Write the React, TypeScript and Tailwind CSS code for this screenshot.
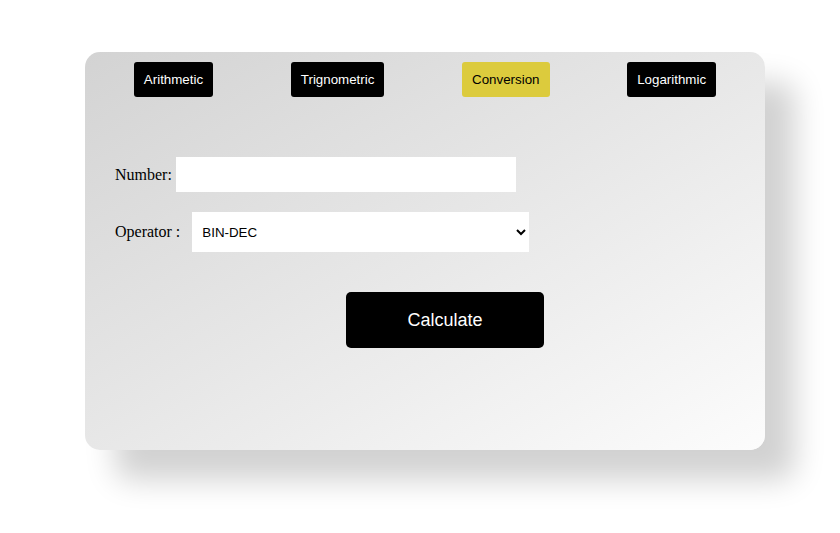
import { useState } from 'react';

const TABS = ['Arithmetic', 'Trignometric', 'Conversion', 'Logarithmic'];

export default function App() {
  const [active, setActive] = useState('Conversion');
  const [num, setNum] = useState('');
  const [op, setOp] = useState('BIN-DEC');

  return (
    <div className="min-h-screen bg-white pt-[52px] pl-[85px]">
      <div className="w-[680px] h-[398px] rounded-[15px] p-[10px] bg-gradient-to-br from-[#d3d3d3] to-[#fcfcfc] shadow-[30px_30px_30px_rgba(0,0,0,0.18)]">
        <div className="flex justify-around">
          {TABS.map((tab) => (
            <button
              key={tab}
              onClick={() => setActive(tab)}
              className={
                tab === active
                  ? 'h-[35px] px-[10px] rounded-[3px] bg-[#dccb3d] text-black text-[13.333px] font-["Liberation_Sans",Arial,sans-serif]'
                  : 'h-[35px] px-[10px] rounded-[3px] bg-black text-white text-[13.333px] font-["Liberation_Sans",Arial,sans-serif]'
              }
            >
              {tab}
            </button>
          ))}
        </div>

        <div className="pl-[20px] mt-[60px] font-['Liberation_Serif',serif] text-[16px] text-black">
          <div className="flex items-center">
            <label>Number:</label>
            <input
              value={num}
              onChange={(e) => setNum(e.target.value)}
              className="ml-[4px] w-[340px] h-[35px] bg-white outline-none px-2"
            />
          </div>

          <div className="flex items-center mt-[20px]">
            <label>Operator :</label>
            <select
              value={op}
              onChange={(e) => setOp(e.target.value)}
              className="ml-[12px] w-[337px] h-[40px] bg-white pl-[6px] text-[13.333px] font-['Liberation_Sans',Arial,sans-serif] outline-none"
            >
              <option>BIN-DEC</option>
              <option>DEC-BIN</option>
              <option>HEX-DEC</option>
              <option>DEC-HEX</option>
              <option>OCT-DEC</option>
              <option>DEC-OCT</option>
            </select>
          </div>
        </div>

        <button className="block ml-[251px] mt-[40px] w-[198px] h-[56px] rounded-[5px] bg-black text-white text-[18px] font-['Liberation_Sans',Arial,sans-serif]">
          Calculate
        </button>
      </div>
    </div>
  );
}
